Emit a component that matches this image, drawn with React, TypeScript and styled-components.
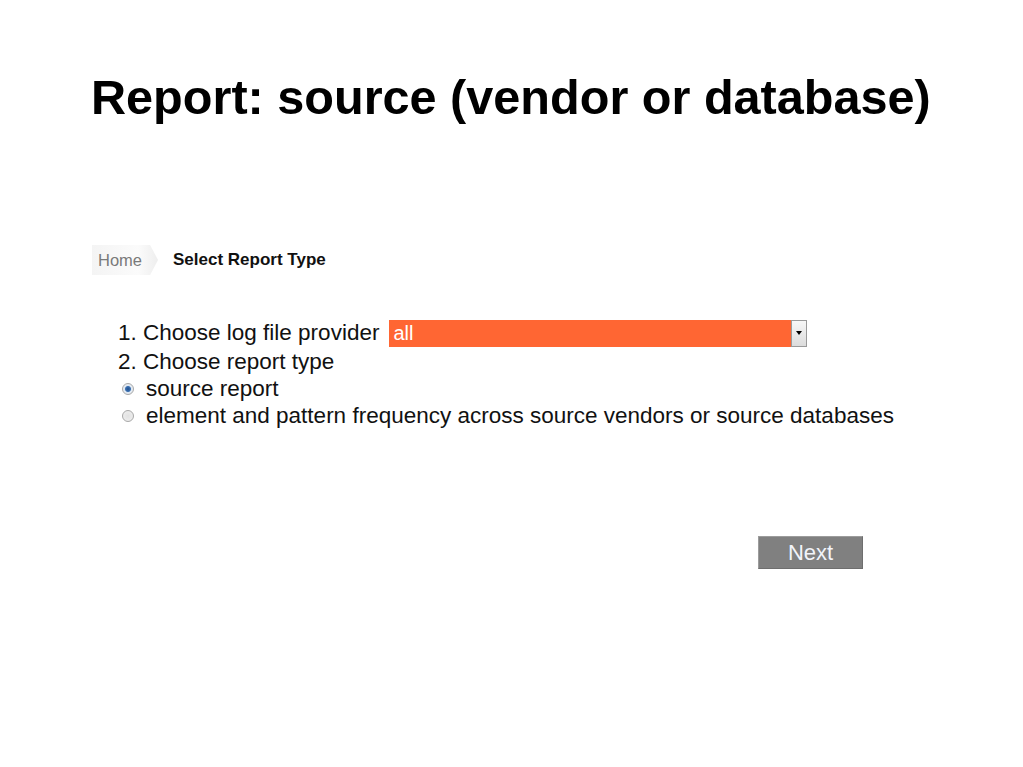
import React from "react";
import styled, { createGlobalStyle } from "styled-components";

const Global = createGlobalStyle`
  html, body { margin: 0; padding: 0; background: #ffffff; }
  body { font-family: "Liberation Sans", Arial, sans-serif; color: #000; }
`;

const Page = styled.div`
  width: 1023px;
  height: 767px;
  display: flex;
  flex-direction: column;
  box-sizing: border-box;
  padding: 69px 0 0 89px;
`;

const Title = styled.h1`
  margin: 0 0 0 2px;
  font-family: "Liberation Sans", Arial, sans-serif;
  font-weight: 700;
  font-size: 48.6px;
  line-height: 56px;
  color: #000;
`;

const Breadcrumb = styled.nav`
  display: flex;
  align-items: center;
  margin-top: 120px;
  margin-left: 3px;
  height: 30px;
`;

const Crumb = styled.span`
  display: flex;
  align-items: center;
  height: 30px;
  padding: 0 16px 0 6px;
  font-size: 16.5px;
  color: #7a7a7a;
  background: linear-gradient(to right, #f4f4f4, #fbfbfb 70%, #eeeeee);
  clip-path: polygon(0 0, 88% 0, 100% 50%, 88% 100%, 0 100%);
`;

const Current = styled.span`
  margin-left: 15px;
  font-size: 17px;
  font-weight: 700;
  color: #111;
`;

const Form = styled.div`
  display: flex;
  flex-direction: column;
  margin-top: 44px;
  margin-left: 29px;
  font-size: 22.5px;
  color: #111;
`;

const Row = styled.div`
  display: flex;
  align-items: center;
  height: 28.5px;
`;

const Label = styled.span`
  line-height: 28px;
`;

const Select = styled.div`
  display: flex;
  align-items: stretch;
  margin-left: 10px;
  width: 418px;
  height: 27px;
  background: #ff6633;
`;

const SelectValue = styled.span`
  flex: 1;
  padding-left: 4px;
  color: #fff;
  font-size: 20px;
  line-height: 27px;
`;

const Arrow = styled.span`
  width: 16px;
  display: flex;
  align-items: center;
  justify-content: center;
  background: linear-gradient(to bottom, #f7f7f7, #dcdcdc);
  border: 1px solid #9a9a9a;
  box-sizing: border-box;
  &::after {
    content: "";
    border-left: 3.5px solid transparent;
    border-right: 3.5px solid transparent;
    border-top: 4px solid #000;
  }
`;

const RadioRow = styled.label`
  display: flex;
  align-items: center;
  height: 26.5px;
  padding-left: 4px;
`;

const Radio = styled.span<{ $checked?: boolean }>`
  width: 12px;
  height: 12px;
  border-radius: 50%;
  box-sizing: border-box;
  border: 1px solid #a8a8a8;
  background: ${(p) =>
    p.$checked
      ? "radial-gradient(circle, #1e4f8c 0, #3a6fb0 2.5px, #dfe8f2 3.5px, #f4f4f4 100%)"
      : "radial-gradient(circle, #e2e2e2 0, #f0f0f0 100%)"};
  margin-right: 12px;
`;

const Footer = styled.div`
  display: flex;
  justify-content: flex-start;
  margin-top: 107px;
  margin-left: 669px;
`;

const Next = styled.button`
  width: 105px;
  height: 33px;
  background: #808080;
  border: 1px solid #9c9c9c;
  border-right-color: #6e6e6e;
  border-bottom-color: #6e6e6e;
  color: #f2f4fa;
  font-family: "Liberation Sans", Arial, sans-serif;
  font-size: 22px;
  padding: 0;
  cursor: pointer;
`;

export default function App() {
  return (
    <>
      <Global />
      <Page>
        <Title>Report: source (vendor or database)</Title>
        <Breadcrumb>
          <Crumb>Home</Crumb>
          <Current>Select Report Type</Current>
        </Breadcrumb>
        <Form>
          <Row>
            <Label>1. Choose log file provider</Label>
            <Select>
              <SelectValue>all</SelectValue>
              <Arrow />
            </Select>
          </Row>
          <Row>
            <Label>2. Choose report type</Label>
          </Row>
          <RadioRow>
            <Radio $checked />
            <Label>source report</Label>
          </RadioRow>
          <RadioRow>
            <Radio />
            <Label>element and pattern frequency across source vendors or source databases</Label>
          </RadioRow>
        </Form>
        <Footer>
          <Next>Next</Next>
        </Footer>
      </Page>
    </>
  );
}
